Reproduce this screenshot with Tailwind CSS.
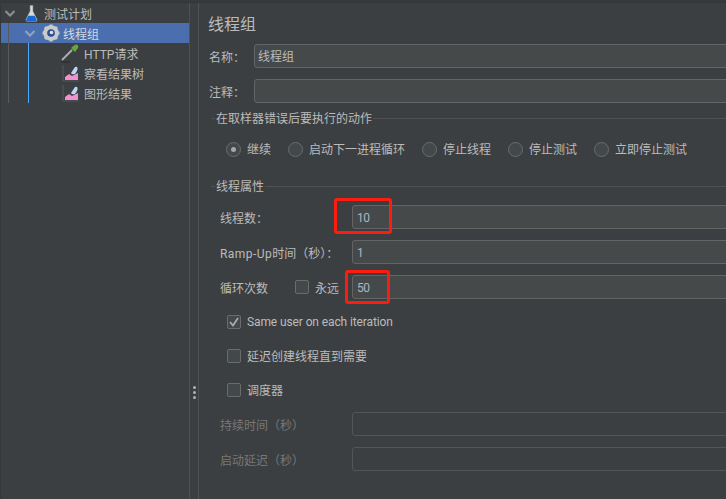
<!DOCTYPE html>
<html lang="zh-CN">
<head>
  <meta charset="UTF-8">
  <title>线程组</title>
  <script src="https://cdn.jsdelivr.net/npm/@tailwindcss/browser@4"></script>
</head>
<body class="bg-[#3c3f41] w-[726px] h-[499px] overflow-hidden font-['Roboto','Noto_Sans_CJK_SC',sans-serif] text-[12px] text-[#bbbbbb]">
  <div class="h-[3px] bg-[#373a3c] border-b border-[#333537]"></div>
  <div class="flex h-[496px]">
    <!-- tree -->
    <div class="relative w-[189px] shrink-0 border-l border-[#35383a]">
      <div class="flex h-5 items-center">
        <svg class="ml-[4px] w-[10px] h-[10px]" viewBox="0 0 10 10" fill="none" stroke="#8c9093" stroke-width="2"><path d="M.5 3L5 7.500 9.500 3"/></svg>
        <svg class="ml-[10px] w-[13px] h-[19px]" viewBox="0 0 14 19"><path d="M5.500 1h3v6l4.500 9q.5 2-1.500 2h-9q-2 0-1.500-2l4.500-9z" fill="#d8dadc" stroke="#9aa0a6" stroke-width=".6"/><path d="M3.600 12h6.800l2.200 4.500q.3 1.500-1.200 1.500h-9q-1.500 0-1.200-1.500z" fill="#1769d2"/></svg>
        <span class="ml-[6px] pt-[4px]">测试计划</span>
      </div>
      <div class="flex h-5 items-center bg-[#4b6eaf]">
        <svg class="ml-[24px] w-[10px] h-[10px]" viewBox="0 0 10 10" fill="none" stroke="#8ea3c9" stroke-width="2"><path d="M.5 3L5 7.500 9.500 3"/></svg>
        <svg class="ml-[7px] w-[18px] h-[18px]" viewBox="0 0 18 18"><circle cx="9" cy="9" r="5.800" fill="none" stroke="#c8cacc" stroke-width="4"/><path d="M9 .5v3M9 14.500v3M.5 9h3M14.500 9h3M3 3l2.100 2.100M12.900 12.900L15 15M3 15l2.100-2.100M12.900 5.100L15 3" stroke="#c8cacc" stroke-width="3"/><circle cx="9" cy="9" r="3.600" fill="#2f4f8c"/><circle cx="9.500" cy="8.500" r="1.800" fill="#d9e2f2"/></svg>
        <span class="ml-[3px] pt-[4px] text-[#d4d8df]">线程组</span>
      </div>
      <div class="flex h-5 items-center">
        <svg class="ml-[59px] w-[20px] h-[20px]" viewBox="0 0 20 20"><path d="M2 17L12 7" stroke="#a8adb0" stroke-width="2"/><path d="M1 19h9" stroke="#2d2f30" stroke-width="1.400"/><path d="M11 5l4 4 3-4q1-2-.5-3T14 2.500z" fill="#63a83f"/></svg>
        <span class="ml-[4px] pt-[4px]">HTTP请求</span>
      </div>
      <div class="flex h-5 items-center">
        <svg class="ml-[61px] w-[18px] h-[18px]" viewBox="0 0 18 18"><path d="M1 1v16h16" fill="none" stroke="#55585a" stroke-width="1"/><path d="M3 16v-3l4-3 3 2 6-3v7z" fill="#f090cf"/><path d="M9 9l4-6q2-1 2.500 1t-2.500 6q-3 1-4-1z" fill="#b9d6f5"/></svg>
        <span class="ml-[4px] pt-[4px]">察看结果树</span>
      </div>
      <div class="flex h-5 items-center">
        <svg class="ml-[61px] w-[18px] h-[18px]" viewBox="0 0 18 18"><path d="M1 1v16h16" fill="none" stroke="#55585a" stroke-width="1"/><path d="M3 16v-3l4-3 3 2 6-3v7z" fill="#f090cf"/><path d="M9 9l4-6q2-1 2.500 1t-2.500 6q-3 1-4-1z" fill="#b9d6f5"/></svg>
        <span class="ml-[4px] pt-[4px]">图形结果</span>
      </div>
      <div class="absolute left-[7px] top-[20px] h-[80px] w-px bg-[#57595b]"></div>
      <div class="absolute left-[27px] top-[40px] h-[60px] w-px bg-[#4aa8ff]"></div>
    </div>

    <!-- splitter -->
    <div class="w-[10px] shrink-0 border-x border-[#515151] flex flex-col items-center gap-[2px] pt-[383px]">
      <div class="w-[3px] h-[3px] rounded-full bg-[#b0b0b0]"></div>
      <div class="w-[3px] h-[3px] rounded-full bg-[#b0b0b0]"></div>
      <div class="w-[3px] h-[3px] rounded-full bg-[#b0b0b0]"></div>
    </div>

    <!-- form -->
    <div class="flex-1 min-w-0 pl-[10px] -mr-[4px]">
      <div class="mt-[10px] -ml-px h-6 leading-6 text-[16px]">线程组</div>
      <div class="mt-[7px] flex items-center h-6">
        <span class="w-[45px] pt-[4px]">名称：</span>
        <div class="flex-1 h-6 bg-[#45494a] border border-[#646464] rounded-[3px] pl-[3px] leading-[24px]">线程组</div>
      </div>
      <div class="mt-[11px] flex items-center h-6">
        <span class="w-[45px] pt-[4px]">注释：</span>
        <div class="flex-1 h-6 bg-[#45494a] border border-[#646464] rounded-[3px]"></div>
      </div>

      <div class="mt-[7px] flex items-center h-4 pl-[2px]">
        <div class="w-[4px] h-px bg-[#515151]"></div>
        <span class="px-px pt-[2px]">在取样器错误后要执行的动作</span>
        <div class="flex-1 h-px bg-[#515151]"></div>
      </div>

      <div class="mt-[14px] pl-[17px] flex items-center h-[18px] gap-[17px]">
        <label class="flex items-center gap-[6px]">
          <span class="w-[15px] h-[15px] rounded-full border border-[#6b6b6b] bg-[#43494a] flex items-center justify-center"><span class="w-[5px] h-[5px] rounded-full bg-[#a7a7a7]"></span></span><span class="pt-[2px]">继续</span>
        </label>
        <label class="flex items-center gap-[6px]"><span class="w-[15px] h-[15px] rounded-full border border-[#6b6b6b] bg-[#43494a]"></span><span class="pt-[2px]">启动下一进程循环</span></label>
        <label class="flex items-center gap-[6px]"><span class="w-[15px] h-[15px] rounded-full border border-[#6b6b6b] bg-[#43494a]"></span><span class="pt-[2px]">停止线程</span></label>
        <label class="flex items-center gap-[6px]"><span class="w-[15px] h-[15px] rounded-full border border-[#6b6b6b] bg-[#43494a]"></span><span class="pt-[2px]">停止测试</span></label>
        <label class="flex items-center gap-[6px]"><span class="w-[15px] h-[15px] rounded-full border border-[#6b6b6b] bg-[#43494a]"></span><span class="pt-[2px]">立即停止测试</span></label>
      </div>

      <div class="mt-[20px] flex items-center h-4 pl-[2px]">
        <div class="w-[4px] h-px bg-[#515151]"></div>
        <span class="px-px pt-[2px]">线程属性</span>
        <div class="flex-1 h-px bg-[#515151]"></div>
      </div>

      <div class="mt-[11px] pl-[11px] flex items-center h-6">
        <span class="w-[132px] pt-[4px]">线程数：</span>
        <div class="relative flex-1 h-6 bg-[#45494a] border border-[#646464] rounded-[3px] pl-[4px] leading-[24px] tracking-[-0.5px] text-[#a9b7c6]">10
          <div class="absolute -left-[19px] -top-[8px] w-[58px] h-[36px] border-[3px] border-[#fd1c0e] rounded-[3px]"></div>
        </div>
      </div>
      <div class="mt-[11px] pl-[11px] flex items-center h-6">
        <span class="w-[132px] pt-[4px]"><span class="tracking-[0.45px]">Ramp-Up</span>时间（秒）：</span>
        <div class="flex-1 h-6 bg-[#45494a] border border-[#646464] rounded-[3px] pl-[4px] leading-[24px] text-[#a9b7c6]">1</div>
      </div>
      <div class="mt-[11px] pl-[11px] flex items-center h-6">
        <span class="w-[75px] pt-[4px]">循环次数</span>
        <span class="w-[14px] h-[14px] rounded-[2px] border border-[#6b6b6b] bg-[#43494a]"></span>
        <span class="w-[43px] pl-[6px] pt-[4px]">永远</span>
        <div class="relative flex-1 h-6 bg-[#45494a] border border-[#646464] rounded-[3px] pl-[4px] leading-[24px] tracking-[-0.5px] text-[#a9b7c6]">50
          <div class="absolute -left-[8px] -top-[6px] w-[45px] h-[34px] border-[3px] border-[#fd1c0e] rounded-[3px]"></div>
        </div>
      </div>

      <div class="mt-[16px] pl-[18px] flex items-center h-[14px] gap-[6px]">
        <span class="w-[14px] h-[14px] rounded-[2px] border border-[#6b6b6b] bg-[#43494a] flex items-center justify-center">
          <svg class="w-[10px] h-[10px]" viewBox="0 0 10 10" fill="none" stroke="#a9a9a9" stroke-width="1.800"><path d="M1 5l3 3.500L9 1"/></svg>
        </span>
        <span class="tracking-[-0.11px]">Same user on each iteration</span>
      </div>
      <div class="mt-[20px] pl-[18px] flex items-center h-[14px] gap-[6px]">
        <span class="w-[14px] h-[14px] rounded-[2px] border border-[#6b6b6b] bg-[#43494a]"></span>
        <span class="pt-[2px]">延迟创建线程直到需要</span>
      </div>
      <div class="mt-[20px] pl-[18px] flex items-center h-[14px] gap-[6px]">
        <span class="w-[14px] h-[14px] rounded-[2px] border border-[#6b6b6b] bg-[#43494a]"></span>
        <span class="pt-[2px]">调度器</span>
      </div>

      <div class="mt-[15px] pl-[11px] flex items-center h-6 text-[#777777]">
        <span class="w-[132px] pt-[4px]">持续时间（秒）</span>
        <div class="flex-1 h-6 border border-[#555555] rounded-[3px]"></div>
      </div>
      <div class="mt-[11px] pl-[11px] flex items-center h-6 text-[#777777]">
        <span class="w-[132px] pt-[4px]">启动延迟（秒）</span>
        <div class="flex-1 h-6 border border-[#555555] rounded-[3px]"></div>
      </div>
    </div>
  </div>
</body>
</html>
